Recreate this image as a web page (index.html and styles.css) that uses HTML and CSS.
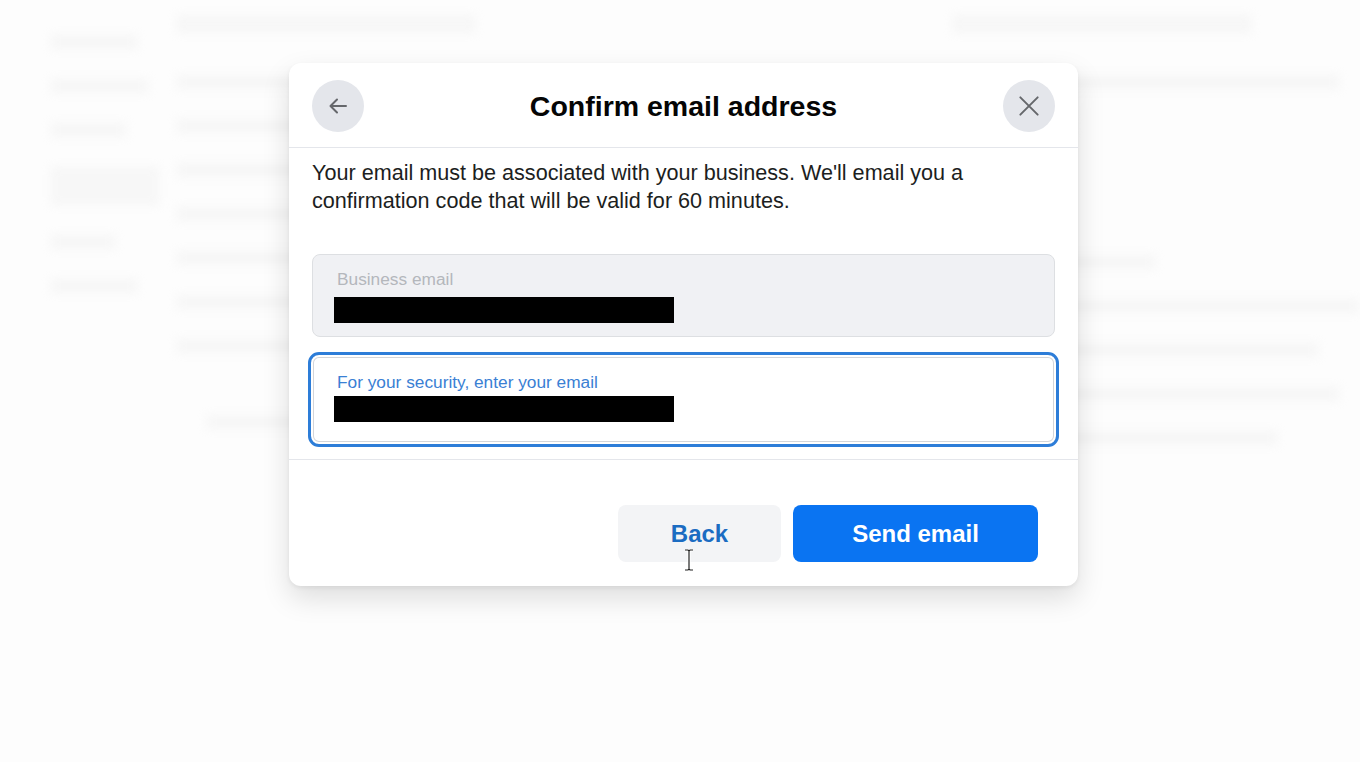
FILE: index.html
```html
<!DOCTYPE html>
<html lang="en">
<head>
    <meta charset="UTF-8">
    <title>Confirm email address</title>
    <link rel="stylesheet" href="styles.css">
</head>
<body>
    <!-- faded page behind the dialog -->
    <div class="page">
        <aside class="side">
            <span class="bar w80"></span>
            <span class="bar w90"></span>
            <span class="bar w70"></span>
            <span class="bar w100 tall"></span>
            <span class="bar w60"></span>
            <span class="bar w80"></span>
        </aside>
        <section class="main">
            <span class="bar title"></span>
            <span class="bar w95"></span>
            <span class="bar w50"></span>
            <span class="bar w40"></span>
            <span class="bar w60"></span>
            <span class="bar w30"></span>
            <span class="bar w70"></span>
            <span class="bar w30"></span>
            <div class="bottom-box">
                <span class="bar w40"></span>
                <span class="bar blue"></span>
            </div>
        </section>
        <section class="right">
            <span class="bar title"></span>
            <span class="bar w95"></span>
            <span class="bar w30"></span>
            <span class="bar w50 gap"></span>
            <span class="bar w100"></span>
            <span class="bar w90"></span>
            <span class="bar w95"></span>
            <span class="bar w80"></span>
        </section>
    </div>

    <div class="overlay">
        <div class="modal">
            <div class="modal-head">
                <button class="circle-btn" aria-label="Back">
                    <svg width="24" height="24" viewBox="0 0 24 24"><path d="M20 12H5M11 5.5L4.5 12 11 18.5" fill="none" stroke="#65676b" stroke-width="2" stroke-linecap="round" stroke-linejoin="round"/></svg>
                </button>
                <h2>Confirm email address</h2>
                <button class="circle-btn" aria-label="Close">
                    <svg width="26" height="26" viewBox="0 0 24 24"><path d="M4 4l16 16M20 4L4 20" fill="none" stroke="#65676b" stroke-width="1.8" stroke-linecap="round"/></svg>
                </button>
            </div>
            <div class="modal-body">
                <p>Your email must be associated with your business. We'll email you a confirmation code that will be valid for 60 minutes.</p>
                <div class="field disabled">
                    <label>Business email</label>
                    <span class="redact"></span>
                </div>
                <div class="field focused">
                    <label>For your security, enter your email</label>
                    <span class="redact"></span>
                </div>
            </div>
            <div class="modal-foot">
                <button class="btn secondary">Back</button>
                <button class="btn primary">Send email</button>
            </div>
        </div>
        <svg class="cursor" width="10" height="22" viewBox="0 0 10 22"><path d="M1 1h3l1 1 1-1h3M5 2v18M1 21h3l1-1 1 1h3" fill="none" stroke="#fff" stroke-width="3"/><path d="M1 1h3l1 1 1-1h3M5 2v18M1 21h3l1-1 1 1h3" fill="none" stroke="#222" stroke-width="1.2"/></svg>
    </div>
</body>
</html>
```

FILE: styles.css
```css
* {
    margin: 0;
    padding: 0;
    box-sizing: border-box;
}

body {
    font-family: "Liberation Sans", Arial, sans-serif;
    background-color: #fdfdfd;
    width: 1360px;
    height: 762px;
    overflow: hidden;
    position: relative;
}

/* blurred page in the back */
.page {
    display: flex;
    gap: 16px;
    padding: 14px 0 0 50px;
    height: 100%;
    filter: blur(5px);
    opacity: 0.25;
}

.bar {
    display: block;
    height: 16px;
    background-color: #e6e6e6;
    border-radius: 3px;
    margin-bottom: 28px;
}

.side { width: 110px; padding-top: 20px; }
.main { width: 690px; }
.right { flex: 1; padding-left: 70px; }

.bar.title { width: 300px; height: 20px; margin-bottom: 40px; }
.bar.tall { height: 40px; }
.bar.gap { margin-top: 120px; }
.w30 { width: 30%; }
.w40 { width: 40%; }
.w50 { width: 50%; }
.w60 { width: 60%; }
.w70 { width: 70%; }
.w80 { width: 80%; }
.w90 { width: 90%; }
.w95 { width: 95%; }
.w100 { width: 100%; }

.bottom-box {
    display: flex;
    justify-content: space-between;
    margin-top: 40px;
    padding: 20px 30px;
}

.bar.blue {
    width: 190px;
    height: 36px;
    background-color: #dfeafc;
}

/* dialog */
.overlay {
    position: absolute;
    inset: 0;
    display: flex;
    justify-content: center;
    align-items: flex-start;
    padding: 63px 0 0 7px;
}

.modal {
    width: 789px;
    background-color: #fff;
    border-radius: 12px;
    box-shadow: 0 12px 28px rgba(0, 0, 0, 0.13), 0 2px 4px rgba(0, 0, 0, 0.06);
}

.modal-head {
    display: flex;
    align-items: center;
    justify-content: space-between;
    padding: 17px 23px 15px 23px;
    border-bottom: 1px solid #e4e6eb;
}

.modal-head h2 {
    font-size: 28.5px;
    line-height: 32px;
    font-weight: bold;
    color: #050505;
}

.circle-btn {
    width: 52px;
    height: 52px;
    border-radius: 50%;
    border: none;
    background-color: #e4e6eb;
    display: flex;
    align-items: center;
    justify-content: center;
}

.modal-body {
    padding: 11px 23px 12px 23px;
    border-bottom: 1px solid #e4e6eb;
}

.modal-body p {
    font-size: 21.6px;
    line-height: 28px;
    color: #1c1e21;
    margin-bottom: 39px;
}

.field {
    border: 1px solid #dddfe2;
    border-radius: 8px;
    padding: 14px 20px 14px 21px;
    height: 83px;
}

.field label {
    display: block;
    font-size: 17.3px;
    line-height: 20px;
    margin-bottom: 8px;
    padding-left: 3px;
}

.redact {
    display: block;
    width: 340px;
    height: 26px;
    background-color: #000;
}

.field.disabled {
    background-color: #f0f1f4;
}

.field.disabled label {
    color: #b4b7bc;
}

.field.focused {
    margin: 15px -4px 0 -4px;
    height: 95px;
    border-radius: 11px;
    border: 3px solid #2d7dd8;
    box-shadow: inset 0 0 0 2px #fff, inset 0 0 0 3px #d3d5d9;
    padding: 17px 22px 0 23px;
}

.field.focused label {
    color: #3a80d4;
    margin-bottom: 4px;
}

.modal-foot {
    display: flex;
    justify-content: flex-end;
    gap: 12px;
    padding: 45px 40px 24px 0;
}

.btn {
    height: 57px;
    border: none;
    border-radius: 8px;
    font-family: "Liberation Sans", Arial, sans-serif;
    font-size: 24px;
    font-weight: bold;
}

.btn.secondary {
    width: 163px;
    background-color: #f3f4f6;
    color: #1b6cc2;
}

.btn.primary {
    width: 245px;
    background-color: #0a74f2;
    color: #fff;
}

.cursor {
    position: absolute;
    left: 684px;
    top: 549px;
}
```
